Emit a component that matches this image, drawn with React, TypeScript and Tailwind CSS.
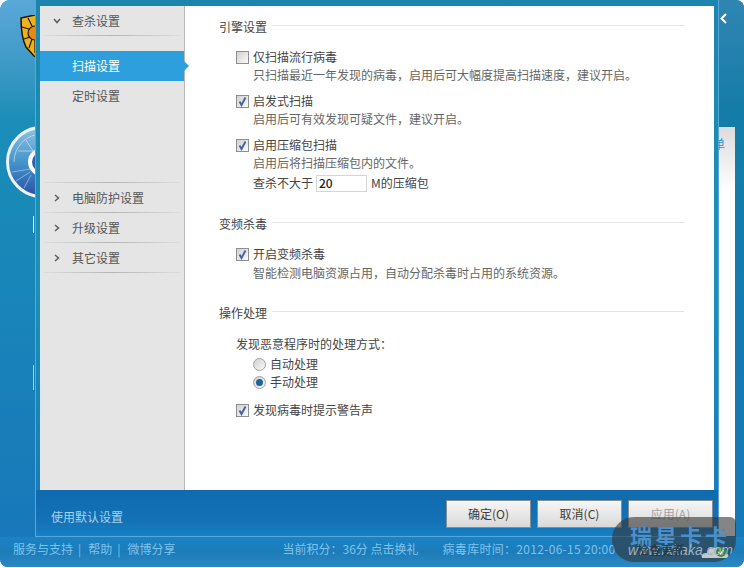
const Check = () => (
  <svg viewBox="0 0 11 11" className="h-[11px] w-[11px]">
    <path d="M2.5 5.5 L4.5 9 L8.5 1.5" fill="none" stroke="#45619f" strokeWidth="1.9" />
  </svg>
);

const CheckBox = ({ checked }: { checked?: boolean }) => (
  <span className="flex h-[13px] w-[13px] shrink-0 items-center justify-center border border-[#8e8f8f] bg-gradient-to-br from-[#d2d2d2] to-[#fafafa]">
    {checked && <Check />}
  </span>
);

const Radio = ({ checked }: { checked?: boolean }) => (
  <span className="flex h-[13px] w-[13px] shrink-0 items-center justify-center rounded-full border border-[#a0a0a0] bg-gradient-to-br from-[#d0d0d0] to-[#f8f8f8]">
    {checked && <span className="h-[7px] w-[7px] rounded-full bg-[#1a6596]" />}
  </span>
);

const SideLine = () => (
  <div className="mx-[4px] h-px bg-gradient-to-r from-[#dddddd] via-[#b4b4b4] to-[#dddddd]" />
);

const Chevron = ({ down }: { down?: boolean }) => (
  <svg viewBox="0 0 8 8" className="h-[8px] w-[8px]">
    <path
      d={down ? "M1 2 L4 5.5 L7 2" : "M2 1 L5.5 4 L2 7"}
      fill="none"
      stroke="#5c5c5c"
      strokeWidth="1.5"
    />
  </svg>
);

const SideGroup = ({ label }: { label: string }) => (
  <>
    <div className="flex h-[29px] items-center pl-[13px] text-[#555555]">
      <Chevron />
      <span className="ml-[11px]">{label}</span>
    </div>
    <SideLine />
  </>
);

const Sidebar = () => (
  <aside className="w-[145px] shrink-0 border-r border-[#b9b9b9] bg-[#e5e5e5]">
    <div className="flex h-[29px] items-center pl-[13px] text-[#555555]">
      <Chevron down />
      <span className="ml-[11px]">查杀设置</span>
    </div>
    <SideLine />
    <div className="relative mt-[15px] flex h-[30px] w-[144px] items-center bg-[#2e9fdd] pl-[32px] text-white">
      扫描设置
      <span className="absolute left-full top-[10px] h-0 w-0 border-y-[5px] border-l-[5px] border-y-transparent border-l-[#2e9fdd]" />
    </div>
    <div className="flex h-[30px] items-center pl-[32px] text-[#555555]">定时设置</div>
    <div className="mt-[71px]">
      <SideLine />
      <SideGroup label="电脑防护设置" />
      <SideGroup label="升级设置" />
      <SideGroup label="其它设置" />
    </div>
  </aside>
);

const SectionTitle = ({ label, className }: { label: string; className: string }) => (
  <div className={`flex h-[18px] items-center ${className}`}>
    <span>{label}</span>
    <div className="ml-[5px] mb-[3px] h-px flex-1 bg-[#e3e3e3]" />
  </div>
);

const Option = ({ label, className, checked }: { label: string; className: string; checked?: boolean }) => (
  <div className={`ml-[17px] flex h-[18px] items-center ${className}`}>
    <CheckBox checked={checked} />
    <span className="ml-[4px]">{label}</span>
  </div>
);

const Desc = ({ children, className = "" }: { children: string; className?: string }) => (
  <div className={`ml-[34px] h-[18px] leading-[18px] text-[#666666] ${className}`}>{children}</div>
);

const Settings = () => (
  <main className="flex-1 bg-white pl-[34px] pr-[30px] pt-[12px] text-[#444444]">
    <SectionTitle label="引擎设置" className="" />
    <Option label="仅扫描流行病毒" className="mt-[12px]" />
    <Desc>只扫描最近一年发现的病毒，启用后可大幅度提高扫描速度，建议开启。</Desc>
    <Option label="启发式扫描" className="mt-[8px]" checked />
    <Desc>启用后可有效发现可疑文件，建议开启。</Desc>
    <Option label="启用压缩包扫描" className="mt-[8px]" checked />
    <Desc>启用后将扫描压缩包内的文件。</Desc>
    <div className="ml-[34px] mt-[2px] flex h-[18px] items-center">
      <span>查杀不大于</span>
      <input
        readOnly
        value="20"
        className="ml-[3px] h-[17px] w-[51px] border border-[#d5d5d5] pl-[2px] text-[12px] font-medium text-[#222222] outline-none"
      />
      <span className="ml-[4px]">M的压缩包</span>
    </div>

    <SectionTitle label="变频杀毒" className="mt-[23px]" />
    <Option label="开启变频杀毒" className="mt-[12px]" checked />
    <Desc className="mt-px">智能检测电脑资源占用，自动分配杀毒时占用的系统资源。</Desc>

    <SectionTitle label="操作处理" className="mt-[22px]" />
    <div className="ml-[17px] mt-[13px] h-[18px] leading-[18px]">发现恶意程序时的处理方式：</div>
    <div className="ml-[34px] mt-[2px] flex h-[18px] items-center">
      <Radio />
      <span className="ml-[4px]">自动处理</span>
    </div>
    <div className="ml-[34px] flex h-[18px] items-center">
      <Radio checked />
      <span className="ml-[4px]">手动处理</span>
    </div>
    <Option label="发现病毒时提示警告声" className="mt-[10px]" checked />
  </main>
);

const FooterButton = ({ label, disabled }: { label: string; disabled?: boolean }) => (
  <button
    className={`h-[28px] w-[85px] border border-[#7f8f9a] bg-gradient-to-b from-[#f6f6f6] to-[#d9d9d9] text-[12px] ${
      disabled ? "text-[#a3a3a3]" : "text-[#3c3c3c]"
    }`}
  >
    {label}
  </button>
);

const Shield = () => (
  <svg viewBox="0 0 30 42" className="absolute left-[20px] top-[15px] h-[42px] w-[30px]">
    <path d="M1 3 L15 0 L30 3 L30 26 L15 42 L6 32 Q1 22 1 3 Z" fill="#f0b21c" stroke="#1d1708" strokeWidth="1.5" />
    <circle cx="15" cy="18" r="7" fill="#e58a12" stroke="#1d1708" strokeWidth="1.2" />
    <path d="M2 12 L9 14 M8 3 L12 11 M4 24 L10 22 M9 33 L12 24 M15 25 L15 38" stroke="#1d1708" strokeWidth="1.2" />
  </svg>
);

const Disc = () => (
  <svg viewBox="0 0 74 74" className="absolute left-[6px] top-[125px] h-[74px] w-[74px]">
    <defs>
      <linearGradient id="disc" x1="0" y1="0" x2="0" y2="1">
        <stop offset="0" stopColor="#8fc2e4" />
        <stop offset="0.5" stopColor="#4494cc" />
        <stop offset="1" stopColor="#2b4fa6" />
      </linearGradient>
    </defs>
    <circle cx="36" cy="37" r="34.5" fill="url(#disc)" stroke="#eef3f5" strokeWidth="3" />
    <path d="M8 37 A28 28 0 0 1 36 9 M12 26 L27 26 M20 15 L27 26" fill="none" stroke="#cfe4f3" strokeWidth="0.7" />
    <path d="M24 47 L10 56 M25 50 L18 63 M24 44 L6 47" stroke="#7fb6de" strokeWidth="1" />
    <circle cx="36" cy="37" r="12" fill="#2f5fae" stroke="#ffffff" strokeWidth="4" />
  </svg>
);

const Watermark = () => (
  <div className="absolute left-[612px] top-[517px] h-[45px] w-[124px] overflow-hidden rounded-[22px] rounded-tr-[6px] bg-[#333333]/60">
    <div className="ml-[18px] mt-[7px] text-[22px] font-bold leading-[22px] tracking-[3px] text-[#4a90cc]">
      瑞星卡卡
    </div>
    <svg viewBox="0 0 30 14" className="absolute left-[88px] top-[28px] h-[14px] w-[30px]">
      <path d="M2 13 Q0 8 7 8 Q9 1 17 3 Q24 3 25 8 Q30 9 28 13 Z" fill="#c9c9c9" />
      <circle cx="21" cy="7" r="5" fill="#3d8b3a" />
      <path d="M18.5 7 L20.5 9 L23.5 5" fill="none" stroke="#ffffff" strokeWidth="1.4" />
    </svg>
    <div className="absolute left-[16px] top-[25px] text-[14px] italic leading-[16px] text-[#9bb4c6] [font-family:'Liberation_Sans',sans-serif]">
      www.rxkaka.com
    </div>
    <div className="absolute left-[25px] top-[25px] text-[12px] leading-[16px] text-[#20323f]">检查更新</div>
  </div>
);

export default function App() {
  return (
    <div className="relative flex h-[568px] w-[744px] flex-col overflow-hidden bg-white text-[12px] [font-family:'Noto_Sans_CJK_SC',sans-serif]">
      <div className="flex flex-col overflow-hidden rounded-[8px] rounded-tl-[10px] bg-gradient-to-b from-[#1f82ae] via-[#1a8db8] to-[#1878b8]">
        <div className="flex h-[537px]">
          {/* left strip of the window underneath */}
          <div className="relative w-[35px] shrink-0 overflow-hidden bg-gradient-to-b from-[#5aa8d8] via-[#1a8eb8] via-[22%] to-[#1878ba]">
            <Shield />
            <Disc />
            <div className="absolute left-[33px] top-[216px] h-[17px] w-px bg-[#d8eef8]" />
            <div className="absolute left-[33px] top-[365px] h-[25px] w-px bg-[#9fd4f2]" />
          </div>

          {/* settings dialog */}
          <div className="flex w-[684px] shrink-0 flex-col border-x border-b border-[#59a7d8] bg-gradient-to-b from-[#1c85ad] via-[#1b91b8] to-[#1878b8] px-[4px] pt-[6px]">
            <div className="flex h-[484px]">
              <Sidebar />
              <Settings />
            </div>
            <div className="-mx-[4px] flex flex-1 items-start bg-gradient-to-b from-[#0f6aae] via-[#1572b6] via-[70%] to-[#1680c6] pl-[15px] pr-[5px] pt-[10px]">
              <span className="mt-[8px] leading-[18px] text-[#a6d2ee]">使用默认设置</span>
              <div className="ml-auto flex gap-[6px]">
                <FooterButton label="确定(O)" />
                <FooterButton label="取消(C)" />
                <FooterButton label="应用(A)" disabled />
              </div>
            </div>
          </div>

          {/* right strip of the window underneath */}
          <div className="relative flex-1 overflow-hidden bg-gradient-to-b from-[#2f86b2] via-[#147ca8] via-[20%] to-[#1878b8]">
            <svg viewBox="0 0 7 11" className="absolute left-[1px] top-[13px] h-[11px] w-[7px]">
              <path d="M6 1 L1.5 5.5 L6 10" fill="none" stroke="#ffffff" strokeWidth="2" />
            </svg>
            <div className="mt-[127px] h-[409px] w-[16px] overflow-hidden bg-gradient-to-b from-[#dcdcdc] to-white to-[16%] pt-[8px] text-[#2f8fd0]">
              <span className="-ml-[6px]">单</span>
            </div>
          </div>
        </div>

        <div className="flex h-[30px] items-center bg-gradient-to-b from-[#1a82c6] via-[#1c7cb8] to-[#2a88c5] pb-[6px] pl-[13px] text-[#7fc3ec]">
          <span>服务与支持</span>
          <span className="ml-[5px]">|</span>
          <span className="ml-[7px]">帮助</span>
          <span className="ml-[5px]">|</span>
          <span className="ml-[7px]">微博分享</span>
          <span className="ml-[107px]">当前积分：36分 点击换礼</span>
          <span className="ml-[24px] tracking-[0.3px]">病毒库时间：2012-06-15 20:00</span>
        </div>
      </div>
      <Watermark />
    </div>
  );
}
